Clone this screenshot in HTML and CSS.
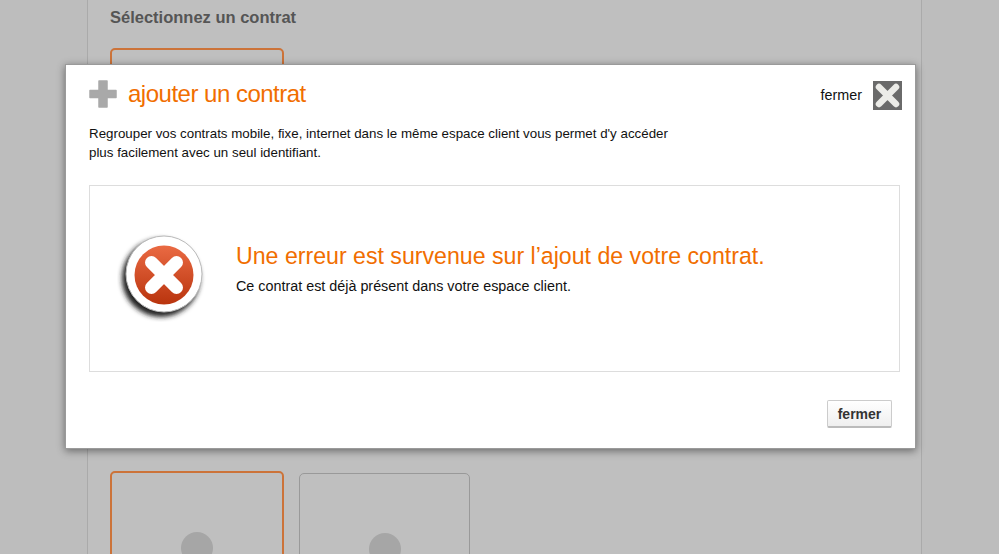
FILE: index.html
```html
<!DOCTYPE html>
<html lang="fr">
<head>
  <meta charset="UTF-8">
  <title>Ajouter un contrat</title>
  <link rel="stylesheet" href="styles.css">
</head>
<body>
  <div class="page">
    <h2 class="page-title">Sélectionnez un contrat</h2>
    <div class="cards">
      <div class="card card-selected"></div>
    </div>
    <div class="cards cards-bottom">
      <div class="card card-selected"><span class="dot"></span></div>
      <div class="card"><span class="dot"></span></div>
    </div>
  </div>

  <div class="modal">
    <div class="modal-head">
      <h1 class="modal-title">
        <svg class="plus" width="28" height="28" viewBox="0 0 28 28"><path d="M10 1h8v9.500h9v7h-9V27h-8v-9.500H1v-7h9z" fill="#a9a9a9" stroke="#a9a9a9" stroke-width="1.500" stroke-linejoin="round"/></svg>
        ajouter un contrat
      </h1>
      <div class="close-top">
        <span class="close-label">fermer</span>
        <svg width="29" height="29" viewBox="0 0 29 29"><rect width="29" height="29" fill="#6a6a6a"/><path d="M6 6l17 17M23 6L6 23" stroke="#ecece8" stroke-width="6.500" stroke-linecap="round"/></svg>
      </div>
    </div>
    <p class="intro">Regrouper vos contrats mobile, fixe, internet dans le même espace client vous permet d'y accéder<br>plus facilement avec un seul identifiant.</p>

    <div class="error-box">
      <svg class="error-icon" width="92" height="92" viewBox="0 0 92 92">
        <defs>
          <linearGradient id="red" x1="0" y1="0" x2="0" y2="1">
            <stop offset="0" stop-color="#ea6a43"/>
            <stop offset="1" stop-color="#b9340e"/>
          </linearGradient>
          <filter id="blur" x="-20%" y="-20%" width="140%" height="140%"><feGaussianBlur stdDeviation="2.500"/></filter>
        </defs>
        <circle cx="44" cy="48" r="39" fill="#222" filter="url(#blur)"/>
        <circle cx="47" cy="44" r="38" fill="#fff" stroke="#bbb" stroke-width="1"/>
        <circle cx="47" cy="45" r="29.500" fill="url(#red)"/>
        <path d="M34.500 32.500l25 25M59.500 32.500l-25 25" stroke="#fff" stroke-width="13" stroke-linecap="round"/>
      </svg>
      <div class="error-text">
        <h2 class="error-title">Une erreur est survenue sur l’ajout de votre contrat.</h2>
        <p class="error-msg">Ce contrat est déjà présent dans votre espace client.</p>
      </div>
    </div>

    <div class="modal-foot">
      <button class="btn" type="button">fermer</button>
    </div>
  </div>
</body>
</html>
```

FILE: styles.css
```css
html, body {
  height: 100%;
}

body {
  margin: 0;
  background-color: #bdbdbd;
  font-family: "Liberation Sans", Arial, sans-serif;
  color: #111;
  overflow: hidden;
}

.page {
  box-sizing: border-box;
  width: 835px;
  height: 554px;
  margin-left: 87px;
  padding: 8px 22px 0;
  background-color: #bfbfbf;
  border-left: 1px solid #aaa;
  border-right: 1px solid #aaa;
  overflow: hidden;
}

.page-title {
  margin: 0;
  font-size: 16.500px;
  line-height: 18px;
  font-weight: bold;
  color: #555;
}

.cards {
  display: flex;
  gap: 15px;
  margin-top: 22px;
}

.cards-bottom {
  margin-top: 23px;
  align-items: flex-start;
}

.card {
  box-sizing: border-box;
  position: relative;
  width: 171px;
  height: 120px;
  margin-top: 2px;
  border: 1px solid #999;
  border-radius: 5px;
}

.card-selected {
  width: 174px;
  height: 400px;
  margin-top: 0;
  border: 2px solid #cc7339;
}

.cards-bottom .card-selected {
  height: 120px;
}

.dot {
  position: absolute;
  left: 50%;
  top: 59px;
  width: 32px;
  height: 32px;
  margin-left: -16px;
  border-radius: 50%;
  background-color: #a6a6a6;
}

.modal {
  position: absolute;
  left: 65px;
  top: 64px;
  box-sizing: border-box;
  width: 851px;
  height: 385px;
  padding: 0 13px 0 23px;
  background-color: #fff;
  border: 1px solid #9a9a9a;
  box-shadow: 0 2px 8px rgba(0, 0, 0, 0.45);
}

.modal-head {
  display: flex;
  justify-content: space-between;
  align-items: center;
  height: 57px;
}

.modal-title {
  display: flex;
  align-items: center;
  gap: 11px;
  margin: 0;
  font-size: 24px;
  font-weight: normal;
  letter-spacing: -0.5px;
  color: #f16e00;
}

.close-top {
  display: flex;
  align-items: center;
  gap: 11px;
  margin-top: 4px;
  font-size: 14.350px;
}

.close-label {
  margin-bottom: 2px;
}

.intro {
  margin: 2px 0 0;
  font-size: 13.330px;
  line-height: 19px;
}

.error-box {
  box-sizing: border-box;
  display: flex;
  align-items: center;
  gap: 27px;
  width: 811px;
  height: 187px;
  margin-top: 23px;
  padding: 0 0 6px 27px;
  border: 1px solid #ddd;
}

.error-text {
  margin-bottom: 13px;
}

.error-title {
  margin: 0;
  font-size: 23.150px;
  line-height: 26px;
  font-weight: normal;
  color: #f16e00;
}

.error-msg {
  margin: 9px 0 0;
  font-size: 14.350px;
  line-height: 17px;
}

.modal-foot {
  display: flex;
  justify-content: flex-end;
  margin-top: 28px;
  padding-right: 10px;
}

.btn {
  width: 65px;
  height: 28px;
  padding: 0;
  font-family: "Liberation Sans", Arial, sans-serif;
  font-size: 14px;
  font-weight: bold;
  color: #333;
  background: linear-gradient(#fff, #efefef);
  border: 1px solid #ccc;
  border-bottom: 2px solid #bbb;
  border-radius: 2px;
}
```
